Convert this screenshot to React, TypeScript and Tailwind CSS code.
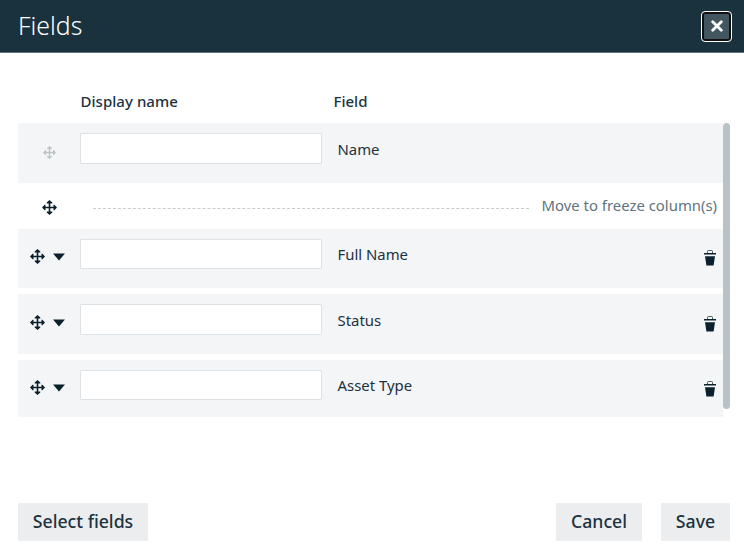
import React from "react";

function MoveIcon({ className = "" }: { className?: string }) {
  return (
    <svg viewBox="0 0 15 15" className={`block shrink-0 ${className}`} fill="currentColor">
      <path d="M7.5 0 10.3 2.6V3.5H8.3V6.7H11.5V4.7H12.4L15 7.5 12.4 10.3H11.5V8.3H8.3V11.5H10.3V12.4L7.5 15 4.7 12.4V11.5H6.7V8.3H3.5V10.3H2.6L0 7.5 2.6 4.7H3.5V6.7H6.7V3.5H4.7V2.6Z" />
    </svg>
  );
}

function TrashIcon() {
  return (
    <svg viewBox="0 0 12 16" className="block h-4 w-3" fill="#0a212d">
      <path d="M3.5 3V1.4Q3.5.5 4.3.5H7.7Q8.5.5 8.5 1.4V3" fill="none" stroke="#4b5c65" />
      <path d="M0 3H12V4.6H0ZM1 6.2H11L9.6 15.4H2.4Z" />
    </svg>
  );
}

function TextField({ className }: { className: string }) {
  return (
    <input
      aria-label="Display name"
      className={`block w-[242px] shrink-0 rounded-[1px] border border-[#dde2e6] bg-white outline-none ${className}`}
    />
  );
}

type RowProps = { name: string; row: string; input: string; icon: string; label: string; trash: string };

const rows: RowProps[] = [
  { name: "Full Name", row: "h-[59px]", input: "mt-[10px] h-[30px]", icon: "mt-5", label: "mt-[15px]", trash: "mt-[21px]" },
  { name: "Status", row: "mt-1.5 h-[60px]", input: "mt-[10px] h-[31px]", icon: "mt-[21px]", label: "mt-4", trash: "mt-[22px]" },
  { name: "Asset Type", row: "mt-1.5 h-[57px]", input: "mt-[10px] h-[30px]", icon: "mt-5", label: "mt-[15px]", trash: "mt-[21px]" },
];

function FieldRow({ name, row, input, icon, label, trash }: RowProps) {
  return (
    <div className={`flex items-start bg-[#f3f5f7] ${row}`}>
      <div className={`flex w-[62px] shrink-0 items-center pl-3 text-[#0a212d] ${icon}`}>
        <MoveIcon className="h-[15px] w-[15px]" />
        <svg viewBox="0 0 12 8" className="ml-[7.5px] block h-2 w-3" fill="currentColor">
          <path d="M0 .5H12L6 7.5Z" />
        </svg>
      </div>
      <TextField className={input} />
      <span className={`ml-[15.5px] flex-1 text-[14.9px] leading-5 ${label}`}>{name}</span>
      <button aria-label={`Remove ${name}`} className={`mr-[7px] ${trash}`}>
        <TrashIcon />
      </button>
    </div>
  );
}

export default function App() {
  return (
    <div className="flex h-[553px] w-[744px] flex-col bg-white font-['Noto_Sans',sans-serif] text-[#1b323f]">
      <header className="flex h-[53px] shrink-0 items-center justify-between border-b border-[#62727c] bg-[#1a313e] pr-3 pl-[18px]">
        <h1 className="pb-0.5 text-[24.8px] leading-[34px] font-light text-white">Fields</h1>
        <button aria-label="Close" className="flex h-[31px] w-[31px] items-center justify-center rounded-[4px] border border-white bg-[#435660] shadow-[inset_0_0_0_2px_#101010]">
          <svg viewBox="0 0 12 12" className="h-3 w-3" stroke="white" strokeWidth="2.8" strokeLinecap="round">
            <path d="M1.7 1.7 10.3 10.3M10.3 1.7 1.7 10.3" />
          </svg>
        </button>
      </header>
      <main className="flex h-[364px] shrink-0 flex-col pr-3.5 pl-[18px]">
        <div className="flex h-[70px] shrink-0 pt-[38px] pl-[62.5px] text-[15px] leading-5 font-medium">
          <span className="w-[253px] tracking-[0.04px]">Display name</span>
          <span>Field</span>
        </div>
        <div className="flex">
          <div className="w-[705px]">
            <div className="flex h-[60px] items-start bg-[#f3f5f7]">
              <div className="w-[62px] pt-[23px] pl-[24.5px] text-[#bdc4c8]">
                <MoveIcon className="h-[13px] w-[13px]" />
              </div>
              <TextField className="mt-[10px] h-[31px]" />
              <span className="mt-4 ml-[15.5px] text-[14.9px] leading-5">Name</span>
            </div>
            <div className="flex h-[46px] items-start">
              <MoveIcon className="mt-[17px] ml-[23.5px] h-[15px] w-[15px] text-[#0a212d]" />
              <div className="mt-[25px] ml-[36.5px] w-[436px] shrink-0 border-t border-dashed border-[#c6cccf]" />
              <span className="mt-3 ml-[12.5px] text-[14.9px] leading-5 whitespace-nowrap text-[#60747f]">Move to freeze column(s)</span>
            </div>
            {rows.map((r) => (
              <FieldRow key={r.name} {...r} />
            ))}
          </div>
          <div className="h-[286px] w-[7px] rounded-full bg-[#b9c2c5]" />
        </div>
      </main>
      <footer className="mt-[86px] flex h-[38px] shrink-0 pr-3.5 pl-[18px] text-[17.7px] leading-[36px] font-medium">
        <button className="w-[130px] rounded-[1px] bg-[#ebedee] pb-0.5">Select fields</button>
        <button className="ml-auto w-[86px] rounded-[1px] bg-[#ebedee] pb-0.5">Cancel</button>
        <button className="ml-[19px] w-[69px] rounded-[1px] bg-[#ebedee] pb-0.5">Save</button>
      </footer>
    </div>
  );
}
